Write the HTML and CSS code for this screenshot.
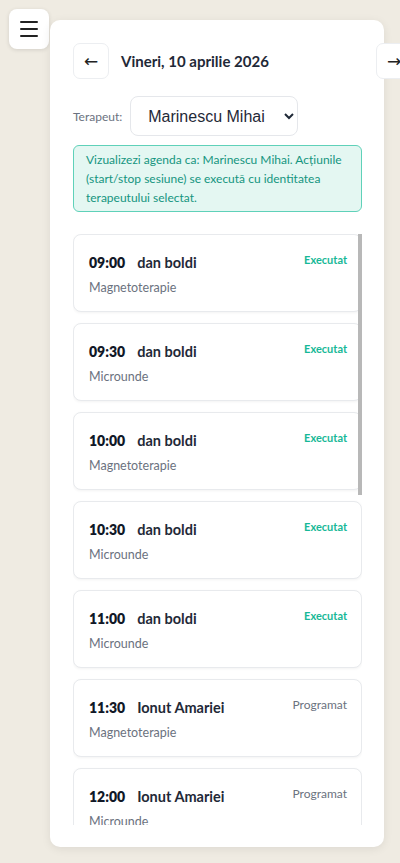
FILE: index.html
```html
<!DOCTYPE html>
<html lang="ro">
<head>
    <meta charset="UTF-8">
    <meta name="viewport" content="width=device-width, initial-scale=1.0">
    <title>Agenda terapeut</title>
    <link rel="stylesheet" href="styles.css">
</head>
<body>
    <div class="page">
        <button class="menu-btn" type="button" aria-label="Meniu">
            <svg width="18" height="16" viewBox="0 0 18 16">
                <rect x="0" y="0" width="18" height="2" rx="1"/>
                <rect x="0" y="7" width="18" height="2" rx="1"/>
                <rect x="0" y="14" width="18" height="2" rx="1"/>
            </svg>
        </button>

        <main class="panel">
            <div class="date-row">
                <button class="nav-btn" type="button">&larr;</button>
                <h2 class="date-title">Vineri, 10 aprilie 2026</h2>
                <button class="nav-btn" type="button">&rarr;</button>
            </div>

            <div class="therapist-row">
                <label for="therapist">Terapeut:</label>
                <select id="therapist">
                    <option>Marinescu Mihai</option>
                    <option>Popescu Ana</option>
                </select>
            </div>

            <div class="info-box">
                Vizualizezi agenda ca: Marinescu Mihai. Acțiunile (start/stop sesiune) se execută cu identitatea terapeutului selectat.
            </div>

            <div class="list-wrap">
                <div class="appointments">
                    <div class="appt">
                        <div class="appt-head">
                            <div class="appt-main"><span class="appt-time">09:00</span><span class="appt-name">dan boldi</span></div>
                            <span class="status done">Executat</span>
                        </div>
                        <div class="appt-service">Magnetoterapie</div>
                    </div>
                    <div class="appt">
                        <div class="appt-head">
                            <div class="appt-main"><span class="appt-time">09:30</span><span class="appt-name">dan boldi</span></div>
                            <span class="status done">Executat</span>
                        </div>
                        <div class="appt-service">Microunde</div>
                    </div>
                    <div class="appt">
                        <div class="appt-head">
                            <div class="appt-main"><span class="appt-time">10:00</span><span class="appt-name">dan boldi</span></div>
                            <span class="status done">Executat</span>
                        </div>
                        <div class="appt-service">Magnetoterapie</div>
                    </div>
                    <div class="appt">
                        <div class="appt-head">
                            <div class="appt-main"><span class="appt-time">10:30</span><span class="appt-name">dan boldi</span></div>
                            <span class="status done">Executat</span>
                        </div>
                        <div class="appt-service">Microunde</div>
                    </div>
                    <div class="appt">
                        <div class="appt-head">
                            <div class="appt-main"><span class="appt-time">11:00</span><span class="appt-name">dan boldi</span></div>
                            <span class="status done">Executat</span>
                        </div>
                        <div class="appt-service">Microunde</div>
                    </div>
                    <div class="appt">
                        <div class="appt-head">
                            <div class="appt-main"><span class="appt-time">11:30</span><span class="appt-name">Ionut Amariei</span></div>
                            <span class="status planned">Programat</span>
                        </div>
                        <div class="appt-service">Magnetoterapie</div>
                    </div>
                    <div class="appt">
                        <div class="appt-head">
                            <div class="appt-main"><span class="appt-time">12:00</span><span class="appt-name">Ionut Amariei</span></div>
                            <span class="status planned">Programat</span>
                        </div>
                        <div class="appt-service">Microunde</div>
                    </div>
                    <div class="appt">
                        <div class="appt-head">
                            <div class="appt-main"><span class="appt-time">12:30</span><span class="appt-name">Ionut Amariei</span></div>
                            <span class="status planned">Programat</span>
                        </div>
                        <div class="appt-service">Magnetoterapie</div>
                    </div>
                    <div class="appt">
                        <div class="appt-head">
                            <div class="appt-main"><span class="appt-time">13:00</span><span class="appt-name">Elena Rusu</span></div>
                            <span class="status planned">Programat</span>
                        </div>
                        <div class="appt-service">Microunde</div>
                    </div>
                    <div class="appt">
                        <div class="appt-head">
                            <div class="appt-main"><span class="appt-time">13:30</span><span class="appt-name">Elena Rusu</span></div>
                            <span class="status planned">Programat</span>
                        </div>
                        <div class="appt-service">Magnetoterapie</div>
                    </div>
                    <div class="appt">
                        <div class="appt-head">
                            <div class="appt-main"><span class="appt-time">14:00</span><span class="appt-name">Vasile Pop</span></div>
                            <span class="status planned">Programat</span>
                        </div>
                        <div class="appt-service">Microunde</div>
                    </div>
                    <div class="appt">
                        <div class="appt-head">
                            <div class="appt-main"><span class="appt-time">14:30</span><span class="appt-name">Vasile Pop</span></div>
                            <span class="status planned">Programat</span>
                        </div>
                        <div class="appt-service">Magnetoterapie</div>
                    </div>
                    <div class="appt">
                        <div class="appt-head">
                            <div class="appt-main"><span class="appt-time">15:00</span><span class="appt-name">Maria Ionescu</span></div>
                            <span class="status planned">Programat</span>
                        </div>
                        <div class="appt-service">Microunde</div>
                    </div>
                    <div class="appt">
                        <div class="appt-head">
                            <div class="appt-main"><span class="appt-time">15:30</span><span class="appt-name">Maria Ionescu</span></div>
                            <span class="status planned">Programat</span>
                        </div>
                        <div class="appt-service">Magnetoterapie</div>
                    </div>
                    <div class="appt">
                        <div class="appt-head">
                            <div class="appt-main"><span class="appt-time">16:00</span><span class="appt-name">Andrei Stan</span></div>
                            <span class="status planned">Programat</span>
                        </div>
                        <div class="appt-service">Microunde</div>
                    </div>
                </div>
                <div class="scroll-thumb"></div>
            </div>
        </main>
    </div>
</body>
</html>
```

FILE: styles.css
```css
body {
    margin: 0;
    padding: 0;
    background-color: #efebe2;
    font-family: Lato, "Noto Sans", sans-serif;
    color: #1f2937;
}
.page {
    display: flex;
    align-items: flex-start;
    padding: 9px 16px 16px 9px;
}
.menu-btn {
    flex-shrink: 0;
    width: 40px;
    height: 40px;
    display: flex;
    align-items: center;
    justify-content: center;
    padding: 0;
    background-color: white;
    border: none;
    border-radius: 8px;
    box-shadow: 0 1px 4px rgba(0, 0, 0, 0.12);
    cursor: pointer;
}
.menu-btn svg {
    fill: #222;
}
.panel {
    margin: 11px 0 0 1px;
    width: 334px;
    height: 827px;
    box-sizing: border-box;
    padding: 23px 22px 22px 23px;
    background-color: white;
    border-radius: 10px;
    box-shadow: 0 2px 10px rgba(0, 0, 0, 0.08);
    display: flex;
    flex-direction: column;
}
.date-row {
    display: flex;
    align-items: center;
    gap: 12px;
}
.nav-btn {
    flex-shrink: 0;
    width: 36px;
    height: 36px;
    padding: 0;
    background-color: white;
    border: 1px solid #eceef1;
    border-radius: 7px;
    font-size: 17px;
    color: #222;
    font-family: "DejaVu Sans", sans-serif;
    cursor: pointer;
}
.date-title {
    flex-shrink: 0;
    width: 243px;
    margin: 0;
    font-size: 15px;
    font-weight: 700;
    color: #1f2937;
}
.therapist-row {
    display: flex;
    align-items: center;
    gap: 8px;
    margin-top: 17px;
}
.therapist-row label {
    font-size: 12px;
    color: #6b7280;
}
.therapist-row select {
    width: 168px;
    height: 40px;
    padding: 0 8px 0 13px;
    font-family: "Liberation Sans", Arial, sans-serif;
    font-size: 16px;
    color: #1f2937;
    background-color: white;
    border: 1px solid #e5e7eb;
    border-radius: 8px;
}
.info-box {
    margin-top: 9px;
    padding: 4px 12px;
    font-size: 12px;
    line-height: 19px;
    color: #14957f;
    background-color: #e4f7f2;
    border: 1px solid #5fd1b9;
    border-radius: 6px;
}
.list-wrap {
    position: relative;
    flex: 1;
    min-height: 0;
    margin-top: 22px;
    display: flex;
}
.appointments {
    flex: 1;
    overflow-y: auto;
    scrollbar-width: none;
    display: flex;
    flex-direction: column;
    gap: 11px;
}
.scroll-thumb {
    position: absolute;
    top: 0;
    right: 0;
    width: 4px;
    height: 261px;
    background-color: #b8b8b8;
}
.appt {
    flex-shrink: 0;
    padding: 17px 14px 14px 15px;
    background-color: white;
    border: 1px solid #e8eaed;
    border-radius: 8px;
    box-shadow: 0 1px 3px rgba(0, 0, 0, 0.05);
}
.appt-head {
    display: flex;
    justify-content: space-between;
    align-items: flex-start;
}
.appt-main {
    font-size: 14px;
    line-height: 22px;
}
.appt-time {
    font-weight: 800;
    color: #111827;
    margin-right: 12px;
}
.appt-name {
    font-size: 14.5px;
    font-weight: 700;
    color: #1f2937;
}
.appt-service {
    margin-top: 5px;
    font-size: 12.5px;
    line-height: 18px;
    color: #6b7280;
}
.status {
    font-size: 11px;
    line-height: 16px;
}
.status.done {
    color: #17b897;
    font-weight: 700;
}
.status.planned {
    font-size: 12px;
    color: #6b7280;
    font-weight: 400;
}
```
